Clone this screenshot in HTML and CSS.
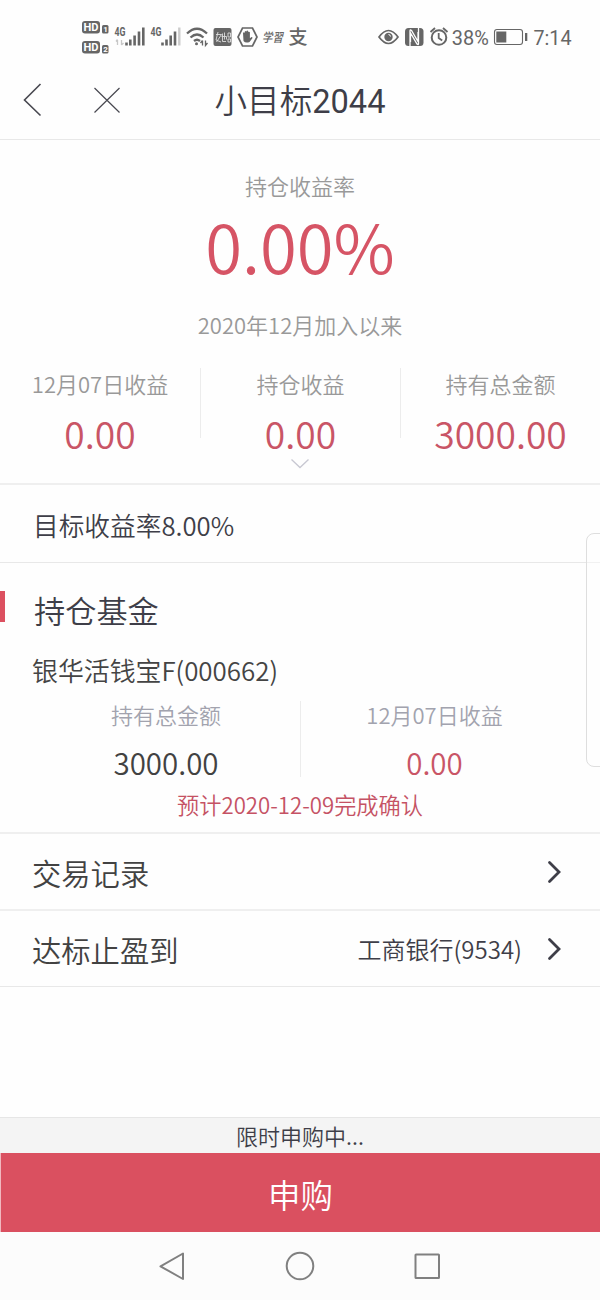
FILE: index.html
```html
<!DOCTYPE html>
<html lang="zh-CN">
<head>
<meta charset="utf-8">
<title>小目标2044</title>
<link rel="stylesheet" href="styles.css">
</head>
<body>
<div class="screen">
  <div class="status">
    <svg class="status-left" width="240" height="50" viewBox="70 10 240 50" fill="none" stroke="#666">
      <g fill="#666" stroke="none">
        <rect x="82" y="21" width="18" height="12.500" rx="3"/><rect x="82" y="41" width="18" height="12.500" rx="3"/>
        <rect x="102" y="25" width="6.500" height="8.500" rx="1.500"/><rect x="102" y="45" width="6.500" height="8.500" rx="1.500"/>
      </g>
      <g class="hd"><text x="83.500" y="31.300" textLength="15" lengthAdjust="spacingAndGlyphs">HD</text><text x="83.500" y="51.300" textLength="15" lengthAdjust="spacingAndGlyphs">HD</text></g>
      <g class="sim"><text x="103.200" y="32">1</text><text x="103.200" y="52">2</text></g>
      <g class="net"><text x="114.500" y="36" textLength="11" lengthAdjust="spacingAndGlyphs">4G</text><text x="150.500" y="36" textLength="11" lengthAdjust="spacingAndGlyphs">4G</text></g>
      <path stroke="#c8c8c8" stroke-width="1.300" d="M117.500 40v5m-1.500-3.500 1.500-2M121.500 40v5m0 0 2-2"/>
      <path stroke-width="2.600" d="M126.500 42.500v3M130.300 39.500v6M134.600 35.500v10M139 31.500v14M143.300 27.500v18M162.500 42.500v3M166.500 39.500v6M170.700 35.500v10M175 31.500v14"/>
      <path stroke="#ccc" stroke-width="2.400" d="M179.300 27.500v18"/>
      <path stroke-width="2.300" d="M187 33.500q10-9.500 20 0M190.500 37.500q6.500-6 13 0M194 41q3-2.500 6 0"/>
      <circle cx="196.500" cy="43.800" r="1.500" fill="#666" stroke="none"/>
      <path stroke-width="1.300" d="M202.500 40.500v5m-2-2.500 2-2.500M205.500 40.500v5l2-2.500"/>
      <rect x="213.500" y="28" width="18" height="18" rx="2" fill="#666" stroke="none"/>
      <path stroke="#ddd" stroke-width=".9" d="M218 32l-2 8 5 2M216 34.500h5.500l-5 7.500M222.500 33.500v8h3.500M221.500 36.500h5v3M224.500 32.500v7M228 33h2.500v4H228zM228 39h2.500v3H228z"/>
      <path stroke-width="1.700" d="M242.500 28h10l4.500 9-4.500 9h-10l-4.500-9z"/>
      <path fill="#666" stroke="none" d="M243 33q.8-1.500 1.700 0v-1.200q.9-1.400 1.700 0v-.7q1-1.300 1.800 0v1q1-1 1.700.2v6l1.600-1.300q1.300 0 .9 1.200L249.500 42q-4 1.500-6-1z"/>
      <g class="brush"><text x="262" y="42" textLength="21" lengthAdjust="spacingAndGlyphs">学習</text></g>
      <g class="pay"><text x="288.500" y="44">支</text></g>
    </svg>
    <svg class="status-right" width="210" height="50" viewBox="370 10 210 50" fill="none" stroke="#666">
      <path stroke-width="1.700" d="M379 37q9.500-13 19 0q-9.500 13-19 0z"/>
      <circle cx="388.500" cy="37" r="4.200" fill="#666" stroke="none"/><path stroke="#fff" stroke-width="1" d="M388.500 34.500q2 .3 2 2"/>
      <rect x="405" y="28" width="18.500" height="18" rx="3.500" fill="#666" stroke="none"/>
      <path stroke="#fff" stroke-width="1.300" d="M410 46V31q0-2 1.500-.5L418 41.500V32M418.500 28v15.500q0 2-1.500.5L410.500 33V42"/>
      <circle cx="439" cy="37.500" r="7.300" stroke-width="2"/><path stroke-width="1.800" d="M438.700 33v5l3.500 2.500M430.500 32l4.500-4M443 28l4.500 4"/>
      <g class="clock"><text x="451.800" y="45" textLength="37" lengthAdjust="spacingAndGlyphs">38%</text><text x="533.500" y="45" textLength="38" lengthAdjust="spacingAndGlyphs">7:14</text></g>
      <rect x="494.500" y="29.500" width="28" height="15" rx="2.500" stroke-width="1.100"/><path fill="#666" stroke="none" d="M496.300 31.500h10v11h-10zM525 33h2.300v8H525z"/>
    </svg>
  </div>
  <header class="header">
    <svg class="nav-icons" width="130" height="40" viewBox="0 80 130 40" fill="none" stroke="#484850"><path stroke-width="1.600" d="M40.500 84 24.500 100l16 15.500"/><path stroke-width="1.200" d="m94.500 88 25 24.500m0-24.500-25 24.500"/></svg>
    <h1 class="title">小目标<span class="title-number">2044</span></h1>
  </header>
  <section class="summary">
    <div class="rate-label">持仓收益率</div>
    <div class="rate">0.00%</div>
    <div class="since">2020年12月加入以来</div>
    <div class="stats">
      <div class="stat"><span class="label">12月07日收益</span><span class="value">0.00</span></div>
      <div class="stat"><span class="label">持仓收益</span><span class="value">0.00</span></div>
      <div class="stat"><span class="label">持有总金额</span><span class="value">3000.00</span></div>
    </div>
    <svg class="expand" width="20" height="12" viewBox="0 0 20 12" fill="none" stroke="#c8c8d2" stroke-width="1.300"><path d="m1.500 1.500 8.500 8 8.500-8"/></svg>
  </section>
  <section class="target">目标收益率8.00%</section>
  <section class="fund">
    <h2 class="fund-title">持仓基金</h2>
    <div class="fund-name">银华活钱宝F(000662)</div>
    <div class="fund-stats">
      <div class="fund-stat"><span class="label">持有总金额</span><span class="amount">3000.00</span></div>
      <div class="fund-stat"><span class="label">12月07日收益</span><span class="amount gain">0.00</span></div>
    </div>
    <div class="confirm">预计2020-12-09完成确认</div>
  </section>
  <div class="row"><span>交易记录</span><svg class="chevron" width="16" height="24" viewBox="0 0 16 24"><path d="m3.500 2.500 9.500 9.500-9.500 9.500"/></svg></div>
  <div class="row last"><span>达标止盈到</span><span class="bank">工商银行(9534)</span><svg class="chevron" width="16" height="24" viewBox="0 0 16 24"><path d="m3.500 2.500 9.500 9.500-9.500 9.500"/></svg></div>
  <div class="notice">限时申购中...</div>
  <div class="buy">申购</div>
  <div class="navbar">
    <svg width="600" height="68" viewBox="0 1232 600 68" fill="none" stroke="#808080" stroke-width="2" stroke-linejoin="round"><path d="M183 1253.500v25.500l-22.500-12.700z"/><circle cx="300" cy="1266" r="13.300"/><rect x="415.500" y="1254.500" width="23.500" height="23.500" rx=".5"/></svg>
  </div>
  <div class="side-panel"></div>
</div>
</body>
</html>
```
FILE: styles.css
```css
* { box-sizing: border-box; }
body { margin: 0; background: #fff; font-family: "Noto Sans CJK SC DemiLight", "Noto Sans CJK SC", sans-serif; font-weight: 350; color: #3e3e48; }
svg { display: block; flex: none; }
.screen { position: relative; width: 600px; height: 1300px; overflow: hidden; display: flex; flex-direction: column; background: #fefefe; }
.status { height: 70px; padding: 10px 20px 0 70px; display: flex; justify-content: space-between; }
.status text { fill: #666; stroke: none; }
.status .hd text { fill: #fff; font: bold 11.5px Roboto, sans-serif; }
.status .sim text { fill: #fff; font: bold 8px Roboto, sans-serif; }
.status .net text { font: bold 12px Roboto, sans-serif; }
.status .brush text { font: italic 500 12.5px "Noto Sans CJK SC", sans-serif; }
.status .pay text { font: 500 19px "Noto Sans CJK SC", sans-serif; }
.status .clock text { font: 20.5px Roboto, sans-serif; }
.header { height: 70px; padding-top: 10px; border-bottom: 1px solid #e8e8e8; display: grid; grid-template-columns: 130px 340px 130px; }
.title { margin: 0; height: 40px; line-height: 44px; text-align: center; font-size: 32.6px; font-weight: 350; font-family: Roboto, "Noto Sans CJK SC DemiLight", "Noto Sans CJK SC", sans-serif; }
.title-number { font-weight: 400; }
.summary { height: 345px; padding-top: 30px; border-bottom: 2px solid #efefef; display: flex; flex-direction: column; align-items: center; color: #999; }
.rate-label, .since, .label { font-size: 22px; line-height: 30px; }
.rate { font-size: 67px; line-height: 80px; margin-top: 5px; color: #d65465; }
.since { margin-top: 24px; }
.stats { width: 600px; height: 70px; margin-top: 29px; display: grid; grid-template-columns: repeat(3, 200px); }
.stat { height: 70px; display: flex; flex-direction: column; align-items: center; border-left: 1px solid #ececec; }
.stat:first-child { border: 0; }
.value { font-size: 37.2px; line-height: 50px; margin-top: 10px; color: #c95566; }
.expand { margin-top: 20px; }
.target { height: 78px; padding-left: 33px; line-height: 80px; font-size: 25.7px; border-bottom: 1px solid #e8e8e8; }
.fund { height: 271px; display: flex; flex-direction: column; border-bottom: 2px solid #efefef; }
.fund-title { margin: 28px 0 0; height: 31px; line-height: 38px; padding-left: 29px; border-left: 5px solid #dc5060; font-size: 31.2px; font-weight: inherit; }
.fund-name { margin-top: 28px; padding-left: 32px; font-size: 25.9px; line-height: 40px; color: #444; }
.fund-stats { height: 76px; margin-top: 11px; padding: 0 32px; display: grid; grid-template-columns: 269px 267px; grid-template-rows: 76px; }
.fund-stat { display: flex; flex-direction: column; align-items: center; }
.fund-stat:first-child { border-right: 1px solid #ececec; }
.fund-stat .label { color: #a2a3ae; line-height: 26px; }
.amount { font-size: 29.5px; line-height: 40px; margin-top: 15px; color: #424242; }
.gain { color: #c95566; }
.confirm { margin-top: 11px; font-size: 22.2px; line-height: 32px; text-align: center; color: #c55264; }
.row { height: 77px; padding: 0 38px 0 32px; display: flex; align-items: center; font-size: 29.3px; line-height: 44px; border-bottom: 2px solid #efefef; color: #424242; }
.row.last { height: 76px; border-bottom: 1px solid #e8e8e8; }
.bank { margin-left: auto; margin-right: 24px; font-size: 24px; color: #3e3e48; }
.chevron { fill: none; stroke: #3e3e48; stroke-width: 2.8; stroke-linecap: round; }
.row > span:first-child + .chevron { margin-left: auto; }
.notice { margin-top: auto; height: 37px; border-top: 1px solid #e6e6e6; background: #f4f4f4; text-align: center; font-size: 22px; line-height: 34px; }
.buy { height: 79px; margin-top: -1px; background: #da5060; border-left: 1px solid #f1b8bf; color: #fff; text-align: center; font-size: 32.5px; line-height: 82px; }
.navbar { height: 68px; background: #fcfcfc; }
.side-panel { position: absolute; top: 533px; right: -10px; width: 24px; height: 234px; border: 1px solid #dedede; border-radius: 8px; background: rgba(255,255,255,.4); }
```
